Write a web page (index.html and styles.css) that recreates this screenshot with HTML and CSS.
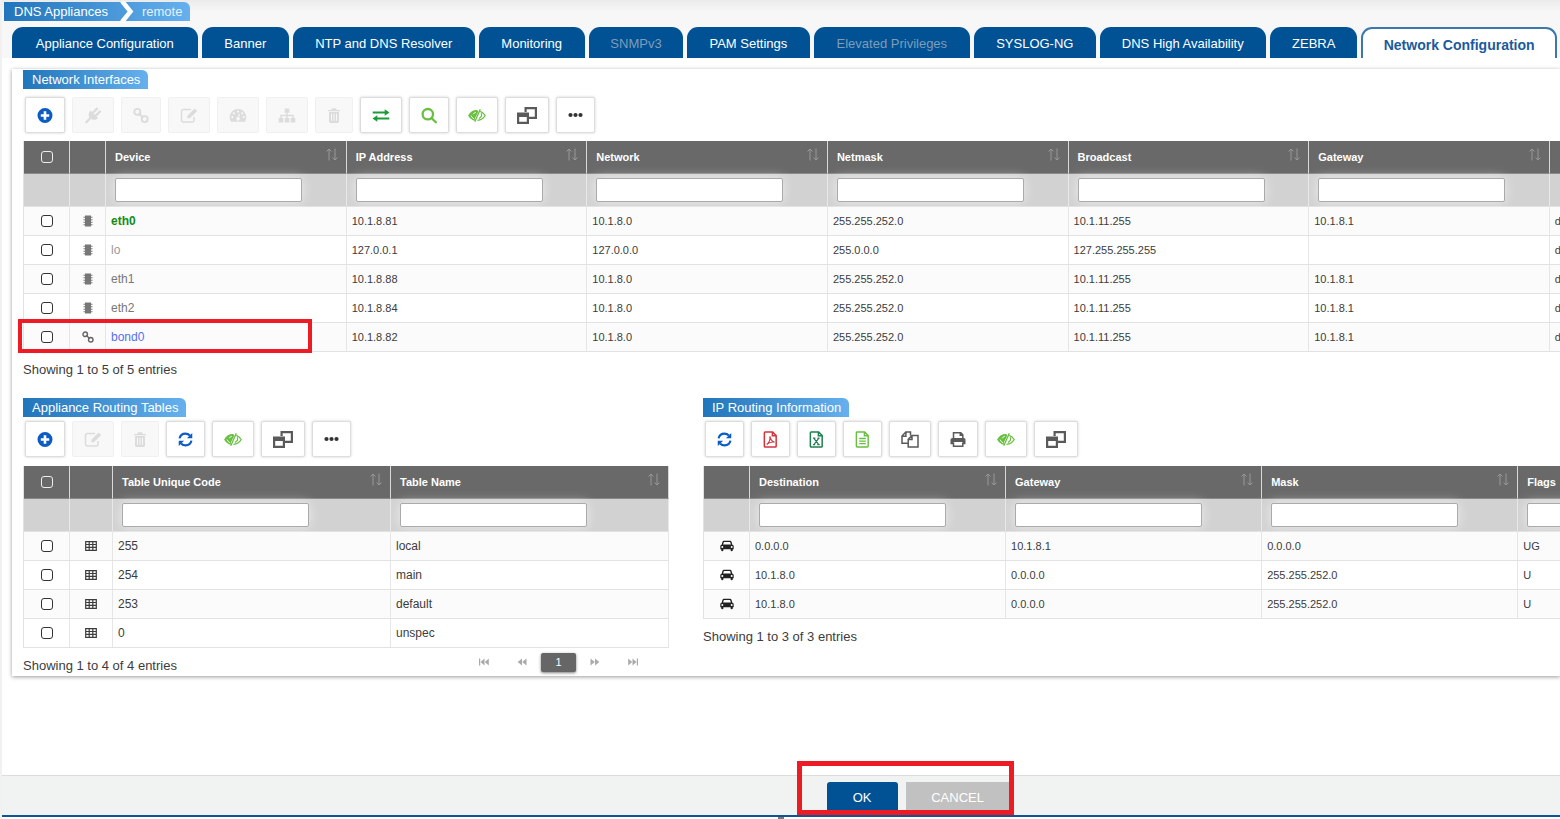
FILE: index.html
```html
<!DOCTYPE html>
<html lang="en">
<head>
	<meta charset="utf-8">
	<meta name="viewport" content="width=device-width, initial-scale=1">
	<title>DNS Appliances - Network Configuration</title>
	<link rel="stylesheet" href="styles.css">
</head>
<body>

<!-- Icon set, used below with <use> -->
<svg class="sprite" aria-hidden="true">
	<symbol id="plus" viewBox="0 0 16 16"><path fill-rule="evenodd" d="M8 .5a7.500 7.500 0 1 0 0 15a7.500 7.500 0 0 0 0-15zM6.700 3.800h2.600v2.900h2.900v2.600H9.300v2.900H6.700V9.300H3.800V6.700h2.900z"/></symbol>
	<symbol id="plug" viewBox="0 0 16 16"><path d="M5.700 3.200l7.100 7.100c-1.700 1.800-4.500 2.400-6.800 1L2.300 15.200H.8v-1.500L4.600 9.900C3.200 7.600 3.900 4.900 5.700 3.200z"/><path d="M8.200 5.200l3.600-3.600M10.900 7.900l3.600-3.600" fill="none" stroke="currentColor" stroke-width="2.200" stroke-linecap="round"/></symbol>
	<symbol id="link" viewBox="0 0 16 16"><g fill="none" stroke="currentColor" stroke-width="1.900"><circle cx="4.300" cy="4.400" r="3"/><circle cx="11.700" cy="11.600" r="3"/><path d="M5.600 5.700l4.800 4.600"/></g></symbol>
	<symbol id="edit" viewBox="0 0 18 16"><path d="M11 2H3.500A2 2 0 0 0 1.500 4v8.500a2 2 0 0 0 2 2H12a2 2 0 0 0 2-2V9.500" fill="none" stroke="currentColor" stroke-width="1.500"/><path d="M14.600.9l2.600 2.600-7.300 7.300H7.300V8.200z"/></symbol>
	<symbol id="gauge" viewBox="0 0 18 16"><path fill-rule="evenodd" d="M9 1.500a8.300 8.300 0 0 0-7 12.700h14A8.300 8.300 0 0 0 9 1.500zM3.300 8.500a1.100 1.100 0 1 1 0 2.200a1.100 1.100 0 0 1 0-2.200zM4.900 4.700a1.100 1.100 0 1 1 0 2.200a1.100 1.100 0 0 1 0-2.200zM9 3a1.100 1.100 0 1 1 0 2.200A1.100 1.100 0 0 1 9 3zM13.200 4.700a1.100 1.100 0 1 1 0 2.200a1.100 1.100 0 0 1 0-2.200zM14.800 8.500a1.100 1.100 0 1 1 0 2.200a1.100 1.100 0 0 1 0-2.200zM9.800 6.200l1 .3-.7 3.400a1.700 1.700 0 1 1-1.200-.3z"/></symbol>
	<symbol id="sitemap" viewBox="0 0 18 16"><path d="M6.700 1h4.600v4.300H9.700v2h6v3.200h1.600V15h-4.600v-4.500h1.600V8.700H9.700v1.800h1.600V15H6.700v-4.500h1.600V8.700H3.700v1.800h1.600V15H.7v-4.500h1.600V7.300h6v-2H6.700z"/></symbol>
	<symbol id="trash" viewBox="0 0 14 16"><path fill-rule="evenodd" d="M5 .8h4l.8 1.700H13v1.300H1V2.500h3.200zM2 4.500h10v9.300c0 1-.6 1.700-1.500 1.700h-7c-.9 0-1.500-.7-1.500-1.700zM4 6.200v7h1v-7zM6.500 6.200v7h1v-7zM9 6.200v7h1v-7z"/></symbol>
	<symbol id="swap" viewBox="0 0 18 16"><path d="M.7 3.900h12V1.700L17.500 5l-4.800 3.300V6.100H.7zM17.300 9.900h-12V7.700L.5 11l4.800 3.300v-2.200h12z"/></symbol>
	<symbol id="search" viewBox="0 0 16 16"><g fill="none" stroke="currentColor" stroke-width="2.300"><circle cx="6.800" cy="6.700" r="5.200"/><path d="M10.500 10.500l4.300 4.300" stroke-linecap="round"/></g></symbol>
	<symbol id="eye" viewBox="0 0 18 16"><path d="M9.600 3.300C5.500 3 2.500 5 .8 8c1.200 2.100 3 3.700 5.400 4.400L10.300 4z"/><path d="M9.500 3.200C5.500 3 2.500 5 .8 8c1.300 2.300 3.500 4.200 6.200 4.700M12.200 3.900c2.200.7 3.900 2.200 5 4.100-1.600 2.800-4.200 4.600-7.800 4.800M13.200 5.800c.9 2 0 4.100-2.300 5.200" fill="none" stroke="currentColor" stroke-width="1.200"/><path d="M12.300 1.800L6.800 14.200" stroke="currentColor" stroke-width="1.300"/><path d="M3 8c.5 1.400 1.500 2.600 2.900 3.300M5.300 6.800C5.700 5.700 6.500 5 7.800 4.800" fill="none" stroke="#fff" stroke-width=".9"/></symbol>
	<symbol id="windows" viewBox="0 0 20 17"><path fill-rule="evenodd" d="M7.500 0H20V12H12V9.800H17.800V2.200H9.700V5H7.500zM0 5.600H12V17H0zM2.200 10V14.800H9.800V10z"/></symbol>
	<symbol id="dots" viewBox="0 0 15 16"><circle cx="2.500" cy="7.500" r="2.100"/><circle cx="7.500" cy="7.500" r="2.100"/><circle cx="12.500" cy="7.500" r="2.100"/></symbol>
	<symbol id="refresh" viewBox="0 0 16 16"><path d="M1.700 6.800C2.300 3.700 4.900 1.800 8 1.800c1.900 0 3.500.8 4.700 2M14.300 9.200c-.6 3.100-3.200 5-6.300 5-1.900 0-3.500-.8-4.700-2" fill="none" stroke="currentColor" stroke-width="2.300"/><path d="M15.200 1v5.700H9.500zM.8 15V9.300h5.700z"/></symbol>
	<symbol id="pdf" viewBox="0 0 15 18"><path d="M1.800 1h8l3.700 3.700v11.500q0 .8-.8.800H1.800q-.8 0-.8-.8V1.800Q1 1 1.800 1zM9.500 1v4h4" fill="none" stroke="currentColor" stroke-width="1.600"/><path d="M6.800 5.800c.9 3.700 2.400 5.600 4.900 6-2.600-.5-5.500.1-8.200 2.500C5.800 12.500 7.400 9 6.800 5.800z" fill="none" stroke="currentColor" stroke-width="1.200"/></symbol>
	<symbol id="excel" viewBox="0 0 15 18"><path d="M1.800 1h8l3.700 3.700v11.500q0 .8-.8.800H1.800q-.8 0-.8-.8V1.800Q1 1 1.800 1zM9.500 1v4h4" fill="none" stroke="currentColor" stroke-width="1.600"/><path d="M4.800 7.700l5 6.600M9.800 7.700l-5 6.600M3.800 7.500h2.500M8.500 7.500h2.300M3.800 14.400h2.300M8.300 14.400h2.600" fill="none" stroke="currentColor" stroke-width="1.300"/></symbol>
	<symbol id="file" viewBox="0 0 15 18"><path d="M1.800 1h8l3.700 3.700v11.500q0 .8-.8.800H1.800q-.8 0-.8-.8V1.800Q1 1 1.800 1zM9.500 1v4h4M4 8h7M4 10.700h7M4 13.400h7" fill="none" stroke="currentColor" stroke-width="1.500"/></symbol>
	<symbol id="copy" viewBox="0 0 18 17"><g fill="none" stroke="currentColor" stroke-width="1.500"><path d="M7 12.300H1V5l3.800-3.900h4.700v3.400M4.900 1.200v4H1M11 4.500h6V16H7.200V8.400zM11 4.600v3.900H7.200"/></g></symbol>
	<symbol id="print" viewBox="0 0 16 16"><path d="M3.500 7V1.300h7.300l2 2V7M10.300 1.500v2.300h2.300M3.500 11v3.700h9.300V11" fill="none" stroke="currentColor" stroke-width="1.500"/><path d="M2.500 6.500h11.300q1.700 0 1.700 1.700v4.600h-2.700v-2.300H3.500v2.300H.5V8.200q0-1.700 2-1.700z"/></symbol>
	<symbol id="chip" viewBox="0 0 10 12"><path d="M2 .5h6v11H2zM.5 1.800h9v1h-9zM.5 4.300h9v1h-9zM.5 6.700h9v1h-9zM.5 9.200h9v1h-9z"/></symbol>
	<symbol id="grid" viewBox="0 0 12 10"><path d="M.7.700h10.600v8.600H.7zM.7 3.500h10.600M.7 6.400h10.600M4.200 1v8M7.800 1v8" fill="none" stroke="currentColor" stroke-width="1.200"/></symbol>
	<symbol id="car" viewBox="0 0 14 12"><path fill-rule="evenodd" d="M3.900.8h6.200c.7 0 1.200.4 1.400 1l.9 2.900c.8.200 1.300.8 1.300 1.600v3h-.9v1q0 1-1.100 1t-1.100-1v-1H3.400v1q0 1-1.100 1t-1.100-1v-1H.3v-3c0-.8.500-1.400 1.300-1.600l.9-2.900c.2-.6.700-1 1.400-1zM3.900 2l-.8 2.600h7.800L10.100 2zM2.300 6a1 1 0 1 0 0 2a1 1 0 0 0 0-2zM11.700 6a1 1 0 1 0 0 2a1 1 0 0 0 0-2z"/></symbol>
	<symbol id="sort" viewBox="0 0 12 13"><path d="M3 12.500V1M.5 3.500L3 1l2.500 2.500M9 .5V12M6.500 9.500L9 12l2.500-2.500" fill="none" stroke="currentColor"/></symbol>
	<symbol id="first" viewBox="0 0 10 8"><path d="M0 .5h1.200v7H0zM5.500.5v7L1.500 4zM9.800.5v7L5.800 4z"/></symbol>
	<symbol id="prev" viewBox="0 0 10 8"><path d="M5 .5v7L.7 4zM9.500.5v7L5.200 4z"/></symbol>
	<symbol id="next" viewBox="0 0 10 8"><path d="M.5.500v7L4.800 4zM5 .5v7L9.300 4z"/></symbol>
	<symbol id="last" viewBox="0 0 10 8"><path d="M.2.500v7L4.200 4zM4.500.5v7L8.500 4zM8.800.5H10v7H8.800z"/></symbol>
</svg>

<div class="page">

	<!-- Breadcrumb and tabs -->
	<header class="top">
		<nav class="crumbs" aria-label="Breadcrumb">
			<a href="#">DNS Appliances</a>
			<svg class="crumb-arrow" viewBox="0 0 14 22" aria-hidden="true"><path d="M2 0l8.500 10.500L2 21" fill="none" stroke="#fff" stroke-width="4.500"/></svg>
			<a class="current" href="#">remote</a>
		</nav>
		<nav class="tabs" aria-label="Configuration">
			<button type="button">Appliance Configuration</button>
			<button type="button">Banner</button>
			<button type="button">NTP and DNS Resolver</button>
			<button type="button">Monitoring</button>
			<button type="button" disabled>SNMPv3</button>
			<button type="button">PAM Settings</button>
			<button type="button" disabled>Elevated Privileges</button>
			<button type="button">SYSLOG-NG</button>
			<button type="button">DNS High Availability</button>
			<button type="button">ZEBRA</button>
			<button type="button" class="active">Network Configuration</button>
		</nav>
	</header>

	<main class="panel">

		<!-- Network Interfaces -->
		<section class="interfaces">
			<h2 class="badge">Network Interfaces</h2>
			<div class="toolbar">
				<button type="button" class="tool blue" aria-label="Add"><svg class="w16"><use href="#plus"/></svg></button>
				<button type="button" class="tool" disabled aria-label="Connect"><svg class="w18"><use href="#plug"/></svg></button>
				<button type="button" class="tool" disabled aria-label="Bond"><svg class="w16"><use href="#link"/></svg></button>
				<button type="button" class="tool" disabled aria-label="Edit"><svg class="w18"><use href="#edit"/></svg></button>
				<button type="button" class="tool" disabled aria-label="Statistics"><svg class="w18"><use href="#gauge"/></svg></button>
				<button type="button" class="tool" disabled aria-label="VLAN"><svg class="w18"><use href="#sitemap"/></svg></button>
				<button type="button" class="tool" disabled aria-label="Delete"><svg class="w14"><use href="#trash"/></svg></button>
				<button type="button" class="tool green" aria-label="Routes"><svg class="w18"><use href="#swap"/></svg></button>
				<button type="button" class="tool lime" aria-label="Search"><svg class="w16"><use href="#search"/></svg></button>
				<button type="button" class="tool lime" aria-label="Show or hide columns"><svg class="w18"><use href="#eye"/></svg></button>
				<button type="button" class="tool" aria-label="Open in window"><svg class="w20"><use href="#windows"/></svg></button>
				<button type="button" class="tool dark" aria-label="More"><svg class="w15"><use href="#dots"/></svg></button>
			</div>
			<table class="grid grid-interfaces">
				<colgroup><col class="c-check"><col class="c-icon"><col><col><col><col><col><col><col></colgroup>
				<thead>
					<tr>
						<th class="mid"><input type="checkbox" aria-label="Select all interfaces"></th>
						<th></th>
						<th><button type="button" class="sort">Device<svg><use href="#sort"/></svg></button></th>
						<th><button type="button" class="sort">IP Address<svg><use href="#sort"/></svg></button></th>
						<th><button type="button" class="sort">Network<svg><use href="#sort"/></svg></button></th>
						<th><button type="button" class="sort">Netmask<svg><use href="#sort"/></svg></button></th>
						<th><button type="button" class="sort">Broadcast<svg><use href="#sort"/></svg></button></th>
						<th><button type="button" class="sort">Gateway<svg><use href="#sort"/></svg></button></th>
						<th></th>
					</tr>
					<tr class="filters">
						<td></td>
						<td></td>
						<td><input type="text" aria-label="Filter Device"></td>
						<td><input type="text" aria-label="Filter IP Address"></td>
						<td><input type="text" aria-label="Filter Network"></td>
						<td><input type="text" aria-label="Filter Netmask"></td>
						<td><input type="text" aria-label="Filter Broadcast"></td>
						<td><input type="text" aria-label="Filter Gateway"></td>
						<td></td>
					</tr>
				</thead>
				<tbody>
					<tr>
						<td class="mid"><input type="checkbox" aria-label="Select eth0"></td>
						<td class="mid"><svg class="chip"><use href="#chip"/></svg></td>
						<td class="name up">eth0</td><td>10.1.8.81</td><td>10.1.8.0</td><td>255.255.252.0</td><td>10.1.11.255</td><td>10.1.8.1</td><td>d</td>
					</tr>
					<tr>
						<td class="mid"><input type="checkbox" aria-label="Select lo"></td>
						<td class="mid"><svg class="chip"><use href="#chip"/></svg></td>
						<td class="name off">lo</td><td>127.0.0.1</td><td>127.0.0.0</td><td>255.0.0.0</td><td>127.255.255.255</td><td></td><td>d</td>
					</tr>
					<tr>
						<td class="mid"><input type="checkbox" aria-label="Select eth1"></td>
						<td class="mid"><svg class="chip"><use href="#chip"/></svg></td>
						<td class="name">eth1</td><td>10.1.8.88</td><td>10.1.8.0</td><td>255.255.252.0</td><td>10.1.11.255</td><td>10.1.8.1</td><td>d</td>
					</tr>
					<tr>
						<td class="mid"><input type="checkbox" aria-label="Select eth2"></td>
						<td class="mid"><svg class="chip"><use href="#chip"/></svg></td>
						<td class="name">eth2</td><td>10.1.8.84</td><td>10.1.8.0</td><td>255.255.252.0</td><td>10.1.11.255</td><td>10.1.8.1</td><td>d</td>
					</tr>
					<tr class="marked">
						<td class="mid"><input type="checkbox" aria-label="Select bond0"></td>
						<td class="mid"><svg class="bond"><use href="#link"/></svg></td>
						<td class="name bonded">bond0</td><td>10.1.8.82</td><td>10.1.8.0</td><td>255.255.252.0</td><td>10.1.11.255</td><td>10.1.8.1</td><td>d</td>
					</tr>
				</tbody>
			</table>
			<p class="info">Showing 1 to 5 of 5 entries</p>
		</section>

		<div class="columns">

			<!-- Appliance Routing Tables -->
			<section class="lower">
				<h2 class="badge">Appliance Routing Tables</h2>
				<div class="toolbar">
					<button type="button" class="tool blue" aria-label="Add"><svg class="w16"><use href="#plus"/></svg></button>
					<button type="button" class="tool" disabled aria-label="Edit"><svg class="w18"><use href="#edit"/></svg></button>
					<button type="button" class="tool" disabled aria-label="Delete"><svg class="w14"><use href="#trash"/></svg></button>
					<button type="button" class="tool blue" aria-label="Refresh"><svg class="w15"><use href="#refresh"/></svg></button>
					<button type="button" class="tool lime" aria-label="Show or hide columns"><svg class="w18"><use href="#eye"/></svg></button>
					<button type="button" class="tool" aria-label="Open in window"><svg class="w20"><use href="#windows"/></svg></button>
					<button type="button" class="tool dark" aria-label="More"><svg class="w15"><use href="#dots"/></svg></button>
				</div>
				<table class="grid">
					<colgroup><col class="c-check"><col class="c-icon-wide"><col><col></colgroup>
					<thead>
						<tr>
							<th class="mid"><input type="checkbox" aria-label="Select all tables"></th>
							<th></th>
							<th><button type="button" class="sort">Table Unique Code<svg><use href="#sort"/></svg></button></th>
							<th><button type="button" class="sort">Table Name<svg><use href="#sort"/></svg></button></th>
						</tr>
						<tr class="filters">
							<td></td>
							<td></td>
							<td><input type="text" aria-label="Filter Table Unique Code"></td>
							<td><input type="text" aria-label="Filter Table Name"></td>
						</tr>
					</thead>
					<tbody>
						<tr>
							<td class="mid"><input type="checkbox" aria-label="Select local"></td>
							<td class="mid"><svg class="cells"><use href="#grid"/></svg></td>
							<td class="word">255</td><td class="word">local</td>
						</tr>
						<tr>
							<td class="mid"><input type="checkbox" aria-label="Select main"></td>
							<td class="mid"><svg class="cells"><use href="#grid"/></svg></td>
							<td class="word">254</td><td class="word">main</td>
						</tr>
						<tr>
							<td class="mid"><input type="checkbox" aria-label="Select default"></td>
							<td class="mid"><svg class="cells"><use href="#grid"/></svg></td>
							<td class="word">253</td><td class="word">default</td>
						</tr>
						<tr>
							<td class="mid"><input type="checkbox" aria-label="Select unspec"></td>
							<td class="mid"><svg class="cells"><use href="#grid"/></svg></td>
							<td class="word">0</td><td class="word">unspec</td>
						</tr>
					</tbody>
				</table>
				<div class="table-foot">
					<p class="info">Showing 1 to 4 of 4 entries</p>
					<nav class="pager" aria-label="Pages">
						<button type="button" aria-label="First page"><svg><use href="#first"/></svg></button>
						<button type="button" aria-label="Previous page"><svg><use href="#prev"/></svg></button>
						<button type="button" class="on">1</button>
						<button type="button" aria-label="Next page"><svg><use href="#next"/></svg></button>
						<button type="button" aria-label="Last page"><svg><use href="#last"/></svg></button>
					</nav>
				</div>
			</section>

			<!-- IP Routing Information -->
			<section class="lower">
				<h2 class="badge">IP Routing Information</h2>
				<div class="toolbar">
					<button type="button" class="tool blue" aria-label="Refresh"><svg class="w15"><use href="#refresh"/></svg></button>
					<button type="button" class="tool red" aria-label="Export PDF"><svg class="w15"><use href="#pdf"/></svg></button>
					<button type="button" class="tool excel" aria-label="Export Excel"><svg class="w15"><use href="#excel"/></svg></button>
					<button type="button" class="tool lime" aria-label="Export CSV"><svg class="w15"><use href="#file"/></svg></button>
					<button type="button" class="tool" aria-label="Copy"><svg class="w18"><use href="#copy"/></svg></button>
					<button type="button" class="tool" aria-label="Print"><svg class="w16"><use href="#print"/></svg></button>
					<button type="button" class="tool lime" aria-label="Show or hide columns"><svg class="w18"><use href="#eye"/></svg></button>
					<button type="button" class="tool" aria-label="Open in window"><svg class="w20"><use href="#windows"/></svg></button>
				</div>
				<table class="grid grid-routes">
					<colgroup><col class="c-check"><col><col><col><col></colgroup>
					<thead>
						<tr>
							<th></th>
							<th><button type="button" class="sort">Destination<svg><use href="#sort"/></svg></button></th>
							<th><button type="button" class="sort">Gateway<svg><use href="#sort"/></svg></button></th>
							<th><button type="button" class="sort">Mask<svg><use href="#sort"/></svg></button></th>
							<th><button type="button" class="sort">Flags<svg><use href="#sort"/></svg></button></th>
						</tr>
						<tr class="filters">
							<td></td>
							<td><input type="text" aria-label="Filter Destination"></td>
							<td><input type="text" aria-label="Filter Gateway"></td>
							<td><input type="text" aria-label="Filter Mask"></td>
							<td><input type="text" aria-label="Filter Flags"></td>
						</tr>
					</thead>
					<tbody>
						<tr>
							<td class="mid"><svg class="car"><use href="#car"/></svg></td>
							<td>0.0.0.0</td><td>10.1.8.1</td><td>0.0.0.0</td><td>UG</td>
						</tr>
						<tr>
							<td class="mid"><svg class="car"><use href="#car"/></svg></td>
							<td>10.1.8.0</td><td>0.0.0.0</td><td>255.255.252.0</td><td>U</td>
						</tr>
						<tr>
							<td class="mid"><svg class="car"><use href="#car"/></svg></td>
							<td>10.1.8.0</td><td>0.0.0.0</td><td>255.255.252.0</td><td>U</td>
						</tr>
					</tbody>
				</table>
				<p class="info">Showing 1 to 3 of 3 entries</p>
			</section>
		</div>
	</main>

	<footer class="bottom">
		<div class="actions">
			<button type="button" class="ok">OK</button>
			<button type="button" class="cancel">CANCEL</button>
		</div>
	</footer>
	<div class="edge"><span></span></div>
</div>

</body>
</html>
```
FILE: styles.css
```css
*, *::after{
	box-sizing: border-box;
	margin: 0;
	padding: 0;
}
body{
	font-family: "Liberation Sans", Arial, sans-serif;
	font-size: 13px;
	color: #3c3c3c;
	background: #fff;
	overflow-x: hidden;
}
button{
	font-family: inherit;
	font-size: 13px;
	border: none;
	cursor: pointer;
}
svg{
	display: block;
	fill: currentColor;
}
.sprite{
	display: none;
}
.page{
	display: flex;
	flex-direction: column;
	min-height: 100vh;
	border-left: 2px solid #f1f1f1;
	overflow: hidden;
}

/* Breadcrumb and tabs */
.top{
	padding: 2px 3px 0 2px;
	background: linear-gradient(#ebebeb, #f7f7f7 12px);
}
.crumbs{
	display: flex;
	align-items: center;
	width: max-content;
	height: 19px;
	padding: 0 8px 0 10px;
	border-top-right-radius: 6px;
	background: linear-gradient(to right, #2175ba, #66b0ee);
}
.crumbs a{
	color: #fff;
	text-decoration: none;
}
.crumbs a.current{
	color: #e3f1fd;
}
.crumb-arrow{
	width: 14px;
	height: 22px;
	margin: 0 8px 0 12px;
}
.tabs{
	display: grid;
	grid-template-columns: 185fr 87fr 181fr 106fr 94fr 122fr 156fr 121fr 166fr 87fr 195fr;
	gap: 4px;
	margin: 6px 0 0 8px;
}
.tabs button{
	height: 31px;
	white-space: nowrap;
	color: #fff;
	background: #005295;
	border-radius: 11px 11px 0 0;
	padding-top: 2px;
}
.tabs button:disabled{
	color: #7f9cb8;
}
.tabs .active{
	font-size: 14px;
	font-weight: bold;
	color: #1b5a9c;
	background: #fff;
	border: 2px solid #3b78ad;
	border-bottom: none;
}

/* Main panel */
.panel{
	margin: 11px 0 0 10px;
	padding: 1px 0 0 11px;
	background: #fff;
	box-shadow: 0 1px 4px rgba(0, 0, 0, .4);
}
.badge{
	width: max-content;
	height: 19px;
	line-height: 19px;
	padding: 0 8px 0 9px;
	font-size: 13px;
	font-weight: normal;
	color: #fff;
	border-top-right-radius: 6px;
	background: linear-gradient(to right, #2175ba, #66b0ee);
}
.toolbar{
	display: flex;
	gap: 7px;
	padding: 8px 0 8px 2px;
}
.lower .toolbar{
	padding: 4px 0 9px 2px;
}
.tool{
	display: flex;
	align-items: center;
	height: 36px;
	padding: 0 11px;
	color: #5a5a5a;
	background: #fff;
	border: 1px solid #ddd;
	border-radius: 2px;
	box-shadow: 0 0 3px rgba(0, 0, 0, .18);
}
.tool:disabled{
	color: #dcdcdc;
	background: #f8f8f8;
	border-color: #f0f0f0;
	box-shadow: none;
}
.tool svg{
	height: 17px;
}
.blue{ color: #0c5cc4; }
.green{ color: #1b9c38; }
.lime{ color: #68bf40; }
.dark{ color: #333; }
.red{ color: #d2343c; }
.excel{ color: #20804f; }
.w14{ width: 14px; }
.w15{ width: 15px; }
.w16{ width: 16px; }
.w18{ width: 18px; }
.w20{ width: 20px; }

/* Tables */
.grid{
	width: 100%;
	table-layout: fixed;
	border-collapse: separate;
	border-spacing: 0;
	border-left: 1px solid #e2e2e2;
}
/* the wide tables run past the right edge of the panel */
.grid-interfaces{
	width: 115%;
}
.grid-routes{
	width: 125%;
}
.c-check{ width: 46px; }
.c-icon{ width: 36px; }
.c-icon-wide{ width: 43px; }
.grid th{
	height: 33px;
	background: #696969;
	border-right: 1px solid #d8d8d8;
	border-bottom: 1px solid #8a8a8a;
}
.grid td{
	height: 29px;
	padding-left: 5px;
	font-size: 11px;
	border-right: 1px solid #e6e6e6;
	border-bottom: 1px solid #e2e2e2;
}
.grid tbody tr:nth-child(odd){
	background: #fbfbfb;
}
.grid td.mid, .grid th.mid{
	padding: 0;
}
.mid svg, .mid input{
	margin: 0 auto;
}
.grid .filters td{
	height: 33px;
	padding-left: 9px;
	background: #d2d2d2;
	border-right-color: #e8e8e8;
}
.filters input{
	display: block;
	width: 187px;
	height: 24px;
	padding: 0 4px;
	border: 1px solid #aaa;
	border-radius: 2px;
	background: #fff;
	box-shadow: 0 0 12px rgba(255, 255, 255, .6);
}
.sort{
	display: flex;
	align-items: center;
	justify-content: space-between;
	width: 100%;
	height: 32px;
	padding: 0 8px 0 9px;
	font-size: 11px;
	font-weight: bold;
	color: #fff;
	background: none;
}
.sort svg{
	width: 12px;
	height: 13px;
	margin-bottom: 6px;
	color: #999;
}
input[type="checkbox"]{
	display: block;
	appearance: none;
	width: 12px;
	height: 12px;
	border: 1px solid #333;
	border-radius: 3px;
	background: #fff;
}
th input[type="checkbox"]{
	border-color: #eee;
	background: none;
}
.chip{
	width: 10px;
	height: 12px;
	color: #777;
}
.bond{
	width: 12px;
	height: 12px;
	color: #666;
}
.cells{
	width: 12px;
	height: 10px;
}
.car{
	width: 14px;
	height: 12px;
	color: #222;
}
.grid .name, .grid .word{
	font-size: 12px;
}
.name{ color: #777; }
.off{ color: #999; }
.up{
	font-weight: bold;
	color: #148c14;
}
.bonded{ color: #5470ee; }

/* Red outlines round the bond0 row and the action buttons */
.marked td:first-child{
	position: relative;
}
.marked td:first-child::after{
	content: "";
	position: absolute;
	top: -4px;
	left: -6px;
	width: 294px;
	height: 34px;
	border: 4px solid #ed1c24;
	pointer-events: none;
}

.info{
	line-height: 16px;
	padding-top: 10px;
}
.columns{
	display: grid;
	grid-template-columns: minmax(0, 646fr) minmax(0, 857fr);
	gap: 34px;
	margin-top: 20px;
}
.table-foot{
	display: flex;
	justify-content: space-between;
	height: 28px;
}
.pager{
	display: flex;
	align-items: center;
	gap: 16px;
	padding-right: 25px;
}
.pager button{
	padding: 0 6px;
	color: #aaa;
	background: none;
}
.pager svg{
	width: 10px;
	height: 8px;
}
.pager .on{
	width: 35px;
	height: 19px;
	margin: 0 -8px;
	font-size: 11px;
	color: #fff;
	background: #666;
	border-radius: 2px;
	box-shadow: 0 1px 3px rgba(0, 0, 0, .5);
}

/* Bottom bar */
.bottom{
	margin-top: auto;
	padding-left: 51%;
	background: #f1f3f3;
	border-top: 1px solid #dcdcdc;
	border-bottom: 2px solid #0f549a;
}
.actions{
	position: relative;
	display: flex;
	gap: 8px;
	width: max-content;
	padding: 6px 4px 2px 30px;
}
.actions::after{
	content: "";
	position: absolute;
	inset: -15px 0 0;
	border: 5px solid #ed1c24;
	pointer-events: none;
}
.actions button{
	height: 31px;
	color: #fff;
}
.ok{
	width: 71px;
	background: #005295;
	border-radius: 3px;
}
.cancel{
	width: 104px;
	background: #c1c1c1;
}
.edge{
	display: flex;
	justify-content: center;
	height: 2px;
}
.edge span{
	width: 6px;
	height: 2px;
	background: #777;
}
```
